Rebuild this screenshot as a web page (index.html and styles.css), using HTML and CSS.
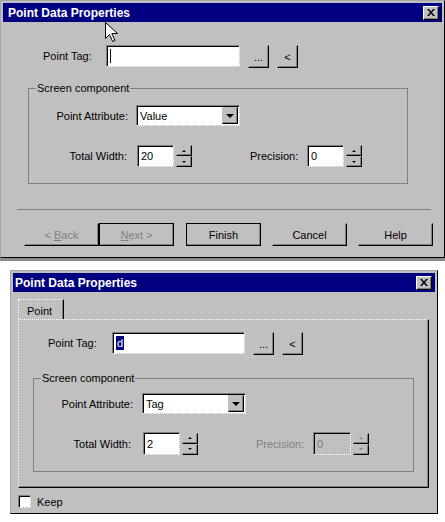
FILE: index.html
```html
<!DOCTYPE html>
<html>
<head>
  <title>Point Data Properties</title>
  <link rel="stylesheet" href="styles.css">
</head>
<body>

  <div class="dialog wizard">
    <div class="titlebar">
      <span>Point Data Properties</span>
      <button class="close"><svg width="8" height="7" viewBox="0 0 8 7"><path d="M0 0h2l2 2.5L6 0h2L5 3.5 8 7H6L4 4.5 2 7H0l3-3.5z" fill="#000"/></svg></button>
    </div>
    <div class="body">
      <div class="tag-row">
        <label class="tag-label">Point Tag:</label>
        <div class="field tag-field"><span class="caret"></span></div>
        <button class="btn small">...</button>
        <button class="btn small">&lt;</button>
      </div>

      <fieldset class="group">
        <legend>Screen component</legend>
        <div class="row attr-row">
          <label class="col">Point Attribute:</label>
          <div class="field combo"><span>Value</span><span class="drop"><i></i></span></div>
        </div>
        <div class="row width-row">
          <label class="col">Total Width:</label>
          <div class="field num">20</div>
          <div class="spin"><span><i class="up"></i></span><span><i class="down"></i></span></div>
          <label class="prec">Precision:</label>
          <div class="field num">0</div>
          <div class="spin"><span><i class="up"></i></span><span><i class="down"></i></span></div>
        </div>
      </fieldset>

      <div class="sep"></div>

      <div class="buttons">
        <button class="btn wide off">&lt; <u>B</u>ack</button>
        <button class="btn wide off framed"><u>N</u>ext &gt;</button>
        <button class="btn wide framed">Finish</button>
        <button class="btn wide">Cancel</button>
        <button class="btn wide">Help</button>
      </div>
    </div>
    <svg class="cursor" width="13" height="21" viewBox="0 0 13 21"><path d="M0.5 0.5v16l4-4 3.2 7 2.3-1-3.2-7h5.7z" fill="#fff" stroke="#000"/></svg>
  </div>

  <div class="dialog props">
    <div class="titlebar">
      <span>Point Data Properties</span>
      <button class="close"><svg width="8" height="7" viewBox="0 0 8 7"><path d="M0 0h2l2 2.5L6 0h2L5 3.5 8 7H6L4 4.5 2 7H0l3-3.5z" fill="#000"/></svg></button>
    </div>
    <div class="body">
      <div class="tabs"><div class="tab">Point</div></div>
      <div class="panel">
        <div class="tag-row">
          <label class="tag-label">Point Tag:</label>
          <div class="field tag-field"><span class="sel">d</span></div>
          <button class="btn small">...</button>
          <button class="btn small">&lt;</button>
        </div>

        <fieldset class="group">
          <legend>Screen component</legend>
          <div class="row attr-row">
            <label class="col">Point Attribute:</label>
            <div class="field combo"><span>Tag</span><span class="drop"><i></i></span></div>
          </div>
          <div class="row width-row">
            <label class="col">Total Width:</label>
            <div class="field num">2</div>
            <div class="spin"><span><i class="up"></i></span><span><i class="down"></i></span></div>
            <label class="prec off">Precision:</label>
            <div class="field num disabled">0</div>
            <div class="spin off"><span><i class="up"></i></span><span><i class="down"></i></span></div>
          </div>
        </fieldset>
      </div>
      <div class="keep">
        <span class="check"></span>
        <label>Keep</label>
      </div>
    </div>
  </div>

</body>
</html>
```

FILE: styles.css
```css
body {
  margin: 0;
  width: 445px;
  height: 522px;
  overflow: hidden;
  background: #fff;
  font-family: 'Liberation Sans', Arial, sans-serif;
  font-size: 11px;
  color: #000;
}

.dialog {
  position: relative;
  box-sizing: border-box;
  background: #c0c0c0;
  border: 1px solid;
  border-color: #a8a8a8 #000 #000 #a8a8a8;
  padding: 2px;
}

.wizard {
  width: 445px;
  height: 258px;
  box-shadow: 0 3px 0 #8c8c8c;
}

.props {
  width: 428px;
  height: 244px;
  margin: 12px 0 0 10px;
}

.titlebar {
  height: 19px;
  background: #000080;
  color: white;
  display: flex;
  align-items: center;
  justify-content: space-between;
  padding: 0 3px 0 5px;
  font-size: 12px;
  font-weight: bold;
}

.props .titlebar {
  padding-left: 2px;
}

.close {
  width: 16px;
  height: 14px;
  padding: 0;
  box-sizing: border-box;
  background: #c0c0c0;
  border: 1px solid;
  border-color: #fff #000 #000 #fff;
  box-shadow: inset -1px -1px #808080;
  display: flex;
  align-items: center;
  justify-content: center;
}

.cursor {
  position: absolute;
  left: 104px;
  top: 21px;
}

/* fields and buttons */

.field {
  box-sizing: border-box;
  background: white;
  background-clip: padding-box;
  border: 1px solid;
  border-style: solid dotted dotted solid;
  border-color: #808080 #fff #fff #808080;
  box-shadow: inset 1px 1px #000;
  display: flex;
  align-items: center;
  padding-left: 3px;
}

.field.disabled {
  background: #c0c0c0;
  color: #808080;
}

.btn {
  box-sizing: border-box;
  background: #c0c0c0;
  border: 1px solid;
  border-color: #c0c0c0 #000 #000 #c0c0c0;
  box-shadow: inset -1px -1px #808080;
  font: inherit;
  color: #000;
  padding: 0;
}

.btn.small {
  width: 21px;
  height: 23px;
  margin-left: 8px;
}

.btn.wide {
  width: 75px;
  height: 23px;
}

.btn.framed {
  border-color: #000;
}

.btn.off {
  color: #808080;
}

.tag-row {
  display: flex;
  align-items: flex-start;
}

.wizard .tag-row {
  margin: 23px 0 0 40px;
}

.tag-label {
  width: 63px;
  line-height: 22px;
}

.tag-field {
  width: 134px;
  height: 22px;
}

.caret {
  width: 1px;
  height: 14px;
  background: #000;
}

.sel {
  background: #000080;
  color: white;
  line-height: 14px;
  padding: 0 1px;
}

/* group box */

.group {
  margin: 14px 0 0 25px;
  padding: 10px 0 0;
  width: 380px;
  height: 102px;
  box-sizing: border-box;
  border: 1px solid #808080;
  min-width: 0;
}

.group legend {
  padding: 0 1px;
  margin-left: 7px;
  line-height: 13px;
}

.row {
  display: flex;
  align-items: center;
}

.col {
  text-align: right;
  flex: none;
}

.attr-row .col {
  width: 99px;
  margin-right: 8px;
}

.width-row {
  margin-top: 19px;
}

.width-row .col {
  width: 98px;
  margin-right: 10px;
}

.combo {
  width: 104px;
  height: 21px;
  justify-content: space-between;
  padding-right: 1px;
}

.drop {
  width: 16px;
  height: 17px;
  box-sizing: border-box;
  background: #c0c0c0;
  border: 1px solid;
  border-color: #c0c0c0 #000 #000 #c0c0c0;
  box-shadow: inset -1px -1px #808080;
  display: flex;
  align-items: center;
  justify-content: center;
}

.drop i {
  border-left: 4px solid transparent;
  border-right: 4px solid transparent;
  border-top: 4px solid #000;
}

.num {
  width: 37px;
  height: 22px;
}

.spin {
  width: 16px;
  height: 22px;
  margin-left: 2px;
  display: flex;
  flex-direction: column;
}

.spin span {
  flex: 1;
  box-sizing: border-box;
  background: #c0c0c0;
  border: 1px solid;
  border-color: #c0c0c0 #000 #000 #c0c0c0;
  box-shadow: inset -1px -1px #808080;
  display: flex;
  align-items: center;
  justify-content: center;
}

.spin i {
  border-left: 2px solid transparent;
  border-right: 2px solid transparent;
}

.spin .up {
  border-bottom: 2px solid #000;
}

.spin .down {
  border-top: 2px solid #000;
}

.spin.off .up {
  border-bottom-color: #808080;
}

.spin.off .down {
  border-top-color: #808080;
}

.prec {
  width: 57px;
  margin-left: 58px;
}

.prec.off {
  color: #808080;
}

.sep {
  margin: 25px 0 0 14px;
  width: 414px;
  height: 1px;
  background: #808080;
}

.buttons {
  display: flex;
  margin: 13px 0 0 21px;
}

.buttons .btn:nth-child(3) {
  margin-left: 12px;
}

.buttons .btn:nth-child(4),
.buttons .btn:nth-child(5) {
  margin-left: 11px;
}

/* tabbed dialog */

.tabs {
  display: flex;
  margin: 7px 0 0 5px;
}

.tab {
  width: 46px;
  height: 20px;
  box-sizing: border-box;
  border: 1px dotted #fff;
  border-bottom: none;
  border-right: 1px solid #000;
  box-shadow: inset -1px 0 #808080;
  padding: 5px 0 0 8px;
}

.panel {
  margin-left: 5px;
  width: 411px;
  height: 169px;
  box-sizing: border-box;
  border: 1px dotted #fff;
  border-right: 1px solid #000;
  border-bottom: 1px solid #000;
  box-shadow: inset -1px -1px #808080;
  padding: 12px 0 0 29px;
}

.panel .tag-label {
  width: 64px;
}

.panel .tag-field {
  width: 133px;
}

.panel .group {
  margin: 17px 0 0 -15px;
  width: 381px;
  height: 100px;
  padding-top: 8px;
}

.panel .attr-row .col {
  margin-right: 9px;
}

.panel .width-row .col {
  width: 97px;
  margin-right: 12px;
}

.panel .width-row {
  margin-top: 18px;
}

.panel .num {
  height: 23px;
}

.panel .prec + .num {
  width: 38px;
}

.keep {
  display: flex;
  align-items: center;
  margin: 7px 0 0 5px;
}

.check {
  width: 13px;
  height: 13px;
  box-sizing: border-box;
  background: white;
  background-clip: padding-box;
  border: 1px solid;
  border-style: solid dotted dotted solid;
  border-color: #808080 #fff #fff #808080;
  box-shadow: inset 1px 1px #000;
  margin-right: 6px;
}
```
